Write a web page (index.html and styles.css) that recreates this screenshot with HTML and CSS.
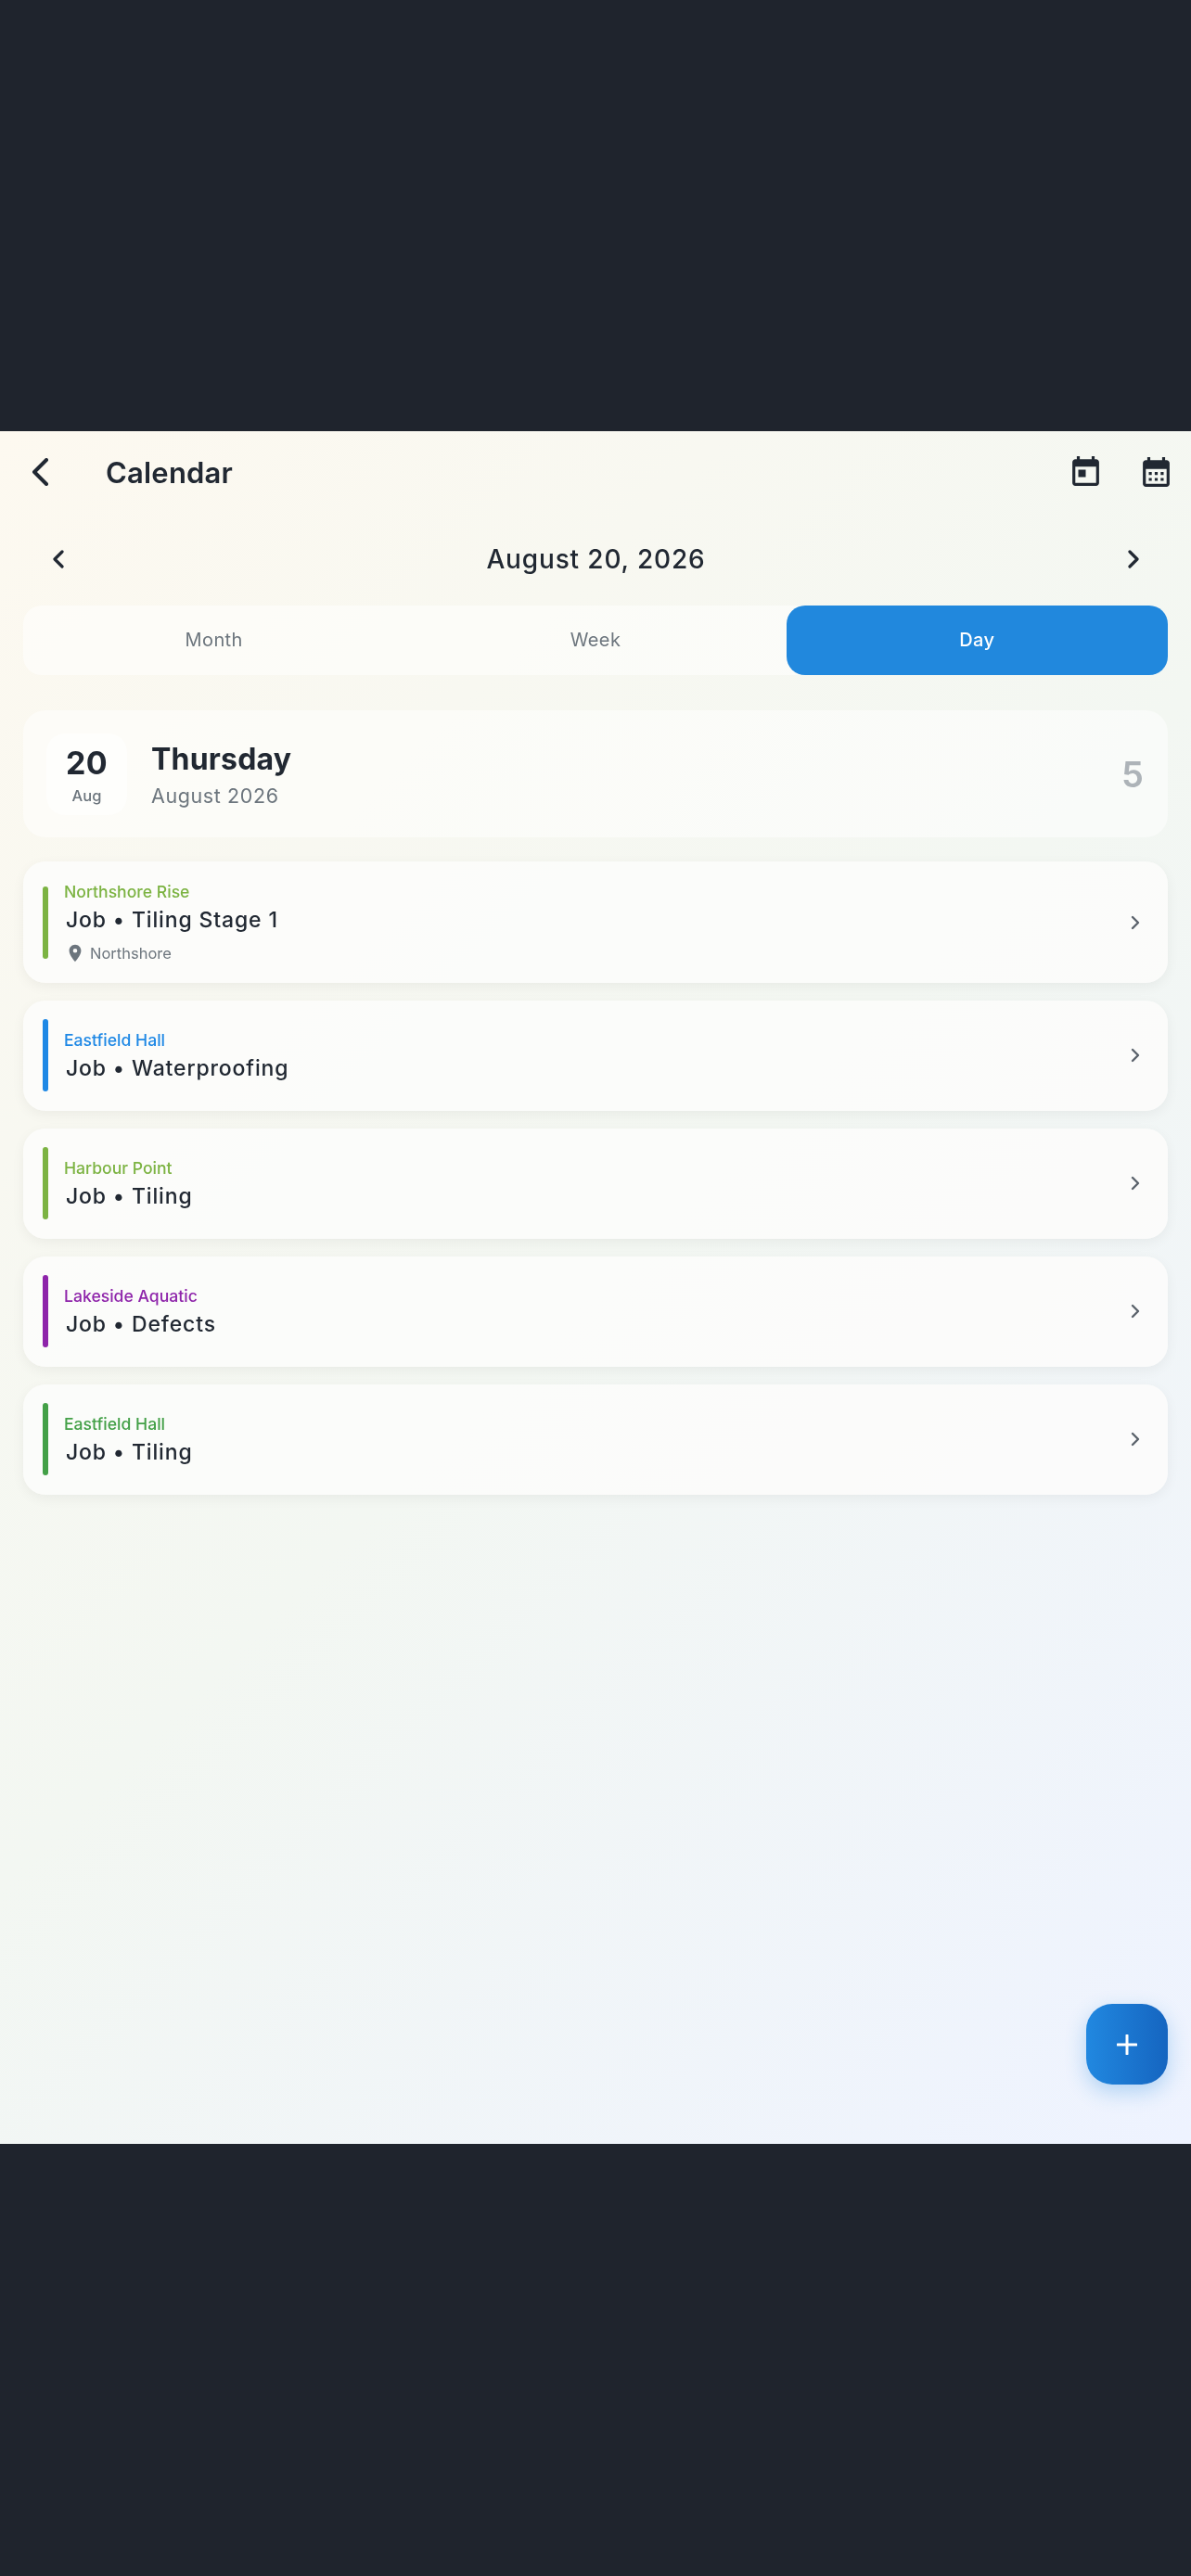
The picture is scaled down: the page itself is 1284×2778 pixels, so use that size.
FILE: index.html
```html
<!DOCTYPE html>
<html lang="en">
<head>
<meta charset="utf-8">
<title>Calendar</title>
<link rel="stylesheet" href="styles.css">
</head>
<body>
<div class="inset-top"></div>
<main class="app">
  <header class="appbar">
    <svg class="back" viewBox="0 0 18 30"><path d="M16 2 3 15l13 13"/></svg>
    <h1 class="title">Calendar</h1>
    <svg class="act act-today" viewBox="3 1 18 20"><path d="M19 3h-1V1h-2v2H8V1H6v2H5c-1.11 0-1.99.9-1.99 2L3 19c0 1.1.89 2 2 2h14c1.1 0 2-.9 2-2V5c0-1.1-.9-2-2-2zm0 16H5V8h14v11zM7 10h5v5H7z"/></svg>
    <svg class="act act-month" viewBox="3 2 18 20"><path d="M19 4h-1V2h-2v2H8V2H6v2H5c-1.1 0-2 .9-2 2v14c0 1.1.9 2 2 2h14c1.1 0 2-.9 2-2V6c0-1.1-.9-2-2-2zm0 16H5V10h14v10zM9 14H7v-2h2v2zm4 0h-2v-2h2v2zm4 0h-2v-2h2v2zm-8 4H7v-2h2v2zm4 0h-2v-2h2v2zm4 0h-2v-2h2v2z"/></svg>
  </header>
  <section class="datenav">
    <svg class="navchev" viewBox="0 0 12 20"><path d="M10 2 2 10l8 8"/></svg>
    <div class="datelabel">August 20, 2026</div>
    <svg class="navchev" viewBox="0 0 12 20"><path d="m2 2 8 8-8 8"/></svg>
  </section>
  <nav class="tabs">
    <div class="tab">Month</div>
    <div class="tab">Week</div>
    <div class="tab tab-on">Day</div>
  </nav>
  <section class="dayhead">
    <div class="datebox"><span class="dnum">20</span><span class="dmon">Aug</span></div>
    <div class="dayinfo"><div class="dayname">Thursday</div><div class="daymonth">August 2026</div></div>
    <div class="daycount">5</div>
  </section>
  <section class="list">
    <article class="card card-tall">
      <span class="bar c-lime-bg"></span>
      <div class="body">
        <div class="site c-lime">Northshore Rise</div>
        <div class="job">Job • Tiling Stage 1</div>
        <div class="loc"><svg class="pin" viewBox="0 0 24 24"><path d="M12 2C8.13 2 5 5.13 5 9c0 5.25 7 13 7 13s7-7.75 7-13c0-3.87-3.13-7-7-7zm0 9.5a2.5 2.5 0 0 1 0-5 2.5 2.5 0 0 1 0 5z"/></svg><span>Northshore</span></div>
      </div>
      <svg class="chev" viewBox="0 0 10 16"><path d="m2 2 6 6-6 6"/></svg>
    </article>
    <article class="card">
      <span class="bar c-blue-bg"></span>
      <div class="body"><div class="site c-blue">Eastfield Hall</div><div class="job">Job • Waterproofing</div></div>
      <svg class="chev" viewBox="0 0 10 16"><path d="m2 2 6 6-6 6"/></svg>
    </article>
    <article class="card">
      <span class="bar c-lime-bg"></span>
      <div class="body"><div class="site c-lime">Harbour Point</div><div class="job">Job • Tiling</div></div>
      <svg class="chev" viewBox="0 0 10 16"><path d="m2 2 6 6-6 6"/></svg>
    </article>
    <article class="card">
      <span class="bar c-purple-bg"></span>
      <div class="body"><div class="site c-purple">Lakeside Aquatic</div><div class="job">Job • Defects</div></div>
      <svg class="chev" viewBox="0 0 10 16"><path d="m2 2 6 6-6 6"/></svg>
    </article>
    <article class="card">
      <span class="bar c-green-bg"></span>
      <div class="body"><div class="site c-green">Eastfield Hall</div><div class="job">Job • Tiling</div></div>
      <svg class="chev" viewBox="0 0 10 16"><path d="m2 2 6 6-6 6"/></svg>
    </article>
  </section>
  <button class="fab" aria-label="Add"><svg viewBox="0 0 22 22"><path d="M11 1v20M1 11h20"/></svg></button>
</main>
</body>
</html>
```
FILE: styles.css
```css
* { box-sizing: border-box; }
html, body { margin: 0; padding: 0; }
body {
  width: 1284px;
  height: 2778px;
  background: #1f242d;
  font-family: "Inter", "Liberation Sans", sans-serif;
  color: #212832;
  overflow: hidden;
}
.inset-top { height: 465px; }
.app {
  position: relative;
  height: 1847px;
  padding: 0 25px;
  background: linear-gradient(135deg, #fdf9f0 0%, #f3f7f2 50%, #eef3ff 100%);
  display: flex;
  flex-direction: column;
  filter: blur(.5px);
}

.appbar {
  height: 88px;
  display: flex;
  align-items: center;
  margin: 0 -2px 0 -25px;
  padding-left: 34px;
}
.back { width: 18px; height: 30px; flex: none; fill: none; stroke: #212832; stroke-width: 4; stroke-linecap: round; stroke-linejoin: round; }
.title { margin: 0 0 0 62px; font-size: 31px; font-weight: 600; letter-spacing: .2px; flex: 1; }
.act { fill: #212832; flex: none; }
.act-today { width: 29px; height: 32px; margin-right: 47px; position: relative; top: -1px; }
.act-month { width: 29px; height: 32px; }

.datenav {
  height: 100px;
  display: flex;
  align-items: center;
  justify-content: space-between;
  padding: 0 31px 0 32px;
}
.navchev { width: 12px; height: 20px; fill: none; stroke: #212832; stroke-width: 3.2; stroke-linecap: round; stroke-linejoin: round; }
.datelabel { font-size: 28px; font-weight: 500; letter-spacing: .85px; }

.tabs {
  height: 75px;
  display: grid;
  grid-template-columns: repeat(3, 1fr);
  background: rgba(255,255,255,.5);
  border-radius: 20px;
}
.tab {
  display: flex;
  align-items: center;
  justify-content: center;
  font-size: 20px;
  font-weight: 400;
  letter-spacing: .4px;
  line-height: 24px;
  padding-bottom: 2px;
  color: #6c757d;
  border-radius: 20px;
}
.tab-on { background: #2188dd; color: #fff; font-weight: 500; }

.dayhead {
  margin-top: 38px;
  height: 137px;
  display: flex;
  align-items: center;
  padding: 0 26px 0 25px;
  background: rgba(255,255,255,.5);
  border-radius: 24px;
}
.datebox {
  width: 87px;
  height: 88px;
  flex: none;
  display: flex;
  flex-direction: column;
  align-items: center;
  justify-content: center;
  padding-top: 2px;
  background: rgba(255,255,255,.5);
  border-radius: 20px;
}
.dnum { font-size: 34px; font-weight: 700; line-height: 42px; letter-spacing: .4px; }
.dmon { font-size: 16.5px; font-weight: 500; line-height: 24px; color: #6c757d; margin-top: 2px; }
.dayinfo { flex: 1; padding-top: 3px; margin-left: 26px; }
.dayname { font-size: 32px; font-weight: 700; line-height: 42px; letter-spacing: .2px; }
.daymonth { font-size: 21.5px; line-height: 32px; color: #6c757d; letter-spacing: .6px; margin-top: 2px; }
.daycount { font-size: 38px; font-weight: 600; color: #adb3b8; }

.list { margin-top: 26px; display: flex; flex-direction: column; gap: 18.9px; }
.card {
  height: 119px;
  display: flex;
  align-items: center;
  padding: 0 30px 0 21px;
  background: rgba(252,252,251,.9);
  border-radius: 24px;
  box-shadow: 0 4px 14px rgba(0,0,0,.05);
}
.card-tall { height: 131px; }
.bar { width: 6px; height: 78px; border-radius: 3px; flex: none; }
.body { flex: 1; margin-left: 17px; padding-top: 2px; }
.card-tall .body { padding-top: 0; }
.site { font-size: 17.6px; font-weight: 500; line-height: 26px; }
.job { font-size: 23px; font-weight: 500; line-height: 34px; letter-spacing: .85px; margin-left: 2px; }
.loc { display: flex; align-items: center; margin: 6px 0 0 1px; font-size: 16.5px; line-height: 26px; color: #6c757d; }
.pin { width: 22px; height: 22px; fill: #6c757d; flex: none; margin-right: 5px; }
.chev { width: 10px; height: 16px; flex: none; fill: none; stroke: #5a626b; stroke-width: 2.4; stroke-linecap: round; stroke-linejoin: round; }

.c-lime { color: #7cb342; } .c-lime-bg { background: #7cb342; }
.c-blue { color: #1e88e5; } .c-blue-bg { background: #1e88e5; }
.c-purple { color: #8e24aa; } .c-purple-bg { background: #8e24aa; }
.c-green { color: #43a047; } .c-green-bg { background: #43a047; }

.fab {
  position: absolute;
  right: 25px;
  bottom: 64px;
  width: 88px;
  height: 87px;
  padding: 0;
  border: 0;
  border-radius: 28px;
  background: linear-gradient(90deg, #2188e0, #1565c0);
  box-shadow: 0 8px 22px rgba(33,136,221,.3);
  display: flex;
  align-items: center;
  justify-content: center;
}
.fab svg { width: 22px; height: 22px; fill: none; stroke: #fff; stroke-width: 3; stroke-linecap: round; }
```
